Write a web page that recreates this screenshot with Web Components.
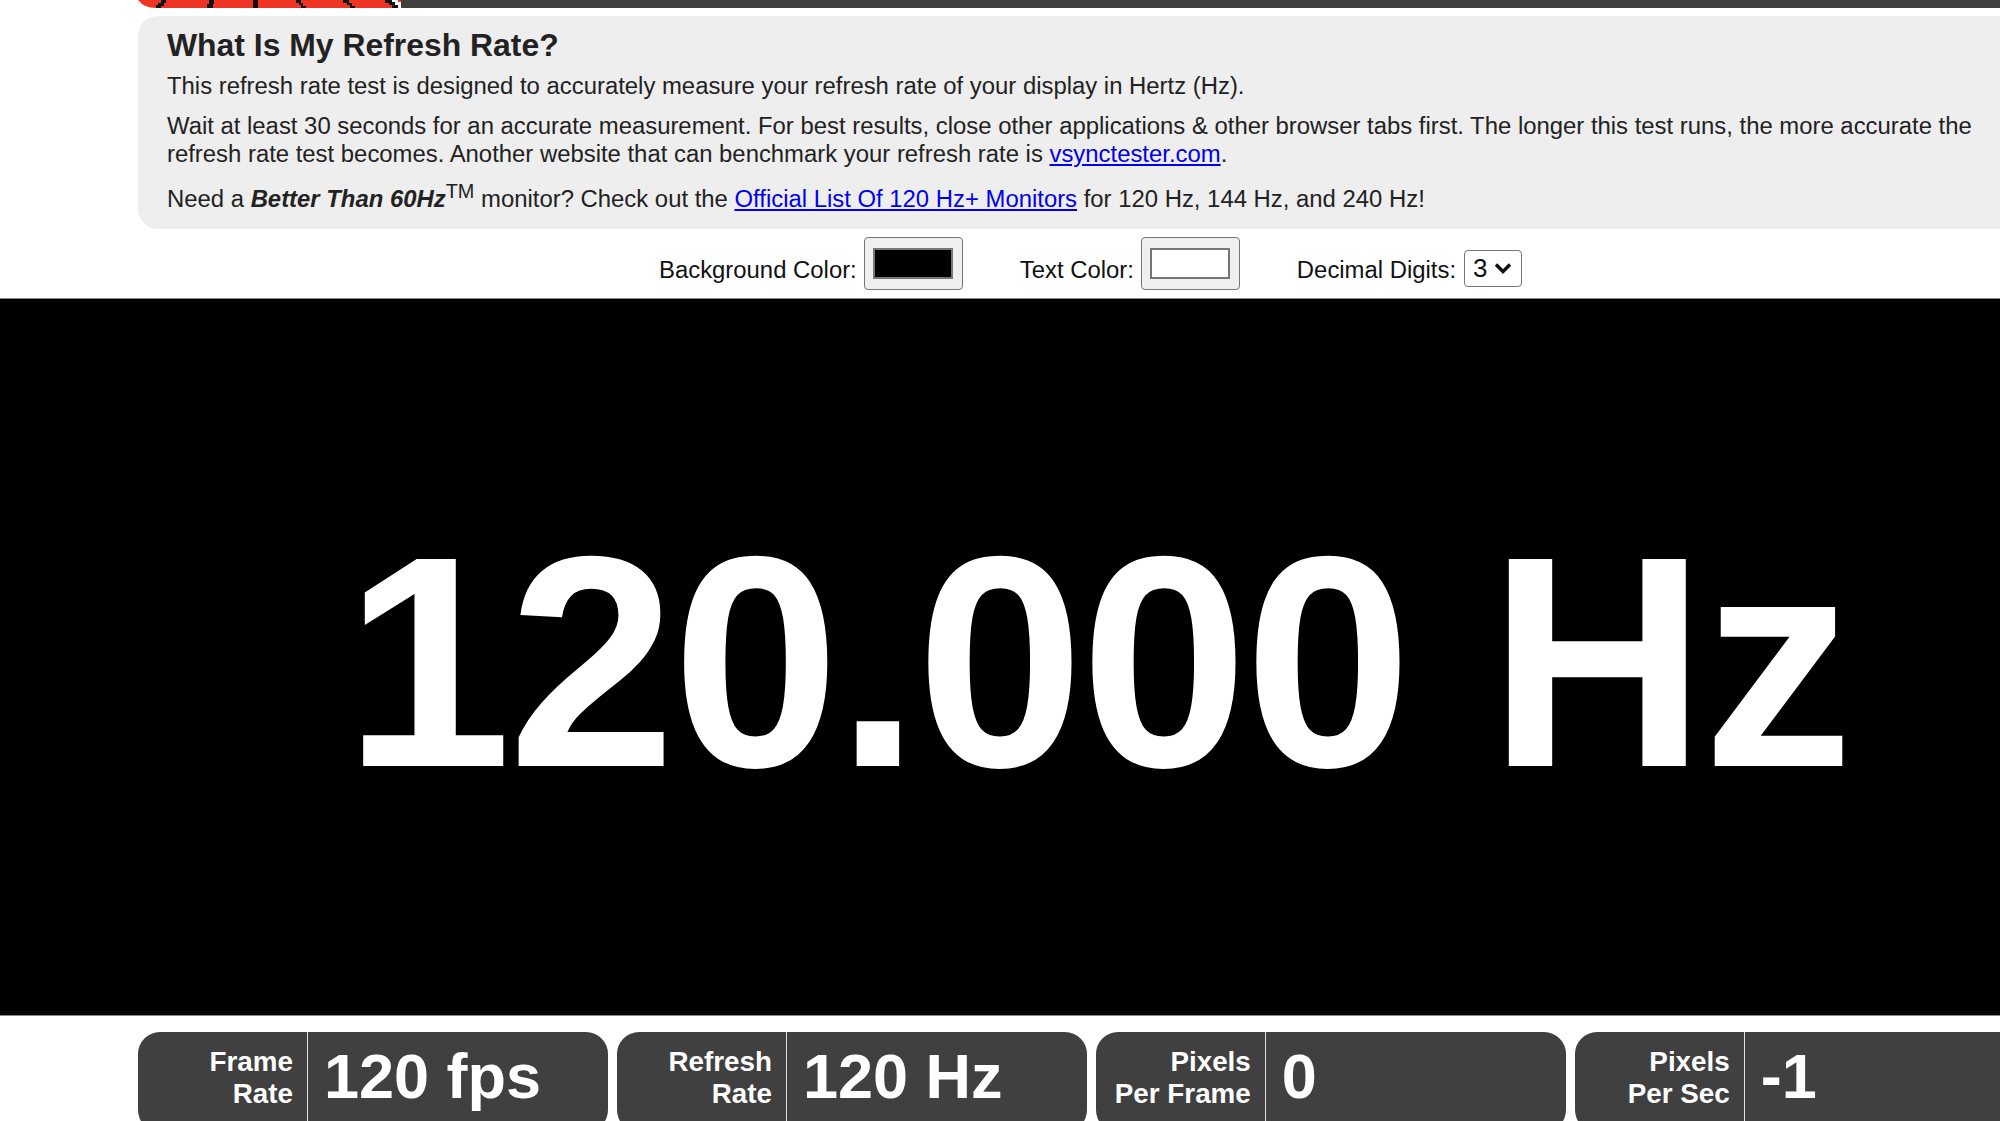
<!DOCTYPE html>
<html>
<head>
<meta charset="utf-8">
<title>What Is My Refresh Rate?</title>
<style>
  html, body { margin:0; padding:0; height:1121px; overflow:hidden; background:#fff; }
  body { font-family:"Liberation Sans", Arial, sans-serif; color:#222; }
  #page { width:2194px; display:flex; flex-direction:column; }
</style>
</head>
<body>
<div id="page">
  <top-bar></top-bar>
  <info-panel>
    <span slot="title">What Is My Refresh Rate?</span>
    <p>This refresh rate test is designed to accurately measure your refresh rate of your display in Hertz (Hz).</p>
    <p>Wait at least 30 seconds for an accurate measurement. For best results, close other applications &amp; other browser tabs first. The longer this test runs, the more accurate the refresh rate test becomes. Another website that can benchmark your refresh rate is <a href="#">vsynctester.com</a>.</p>
    <p>Need a <b><i>Better Than 60Hz</i></b><sup>TM</sup> monitor? Check out the <a href="#">Official List Of 120 Hz+ Monitors</a> for 120 Hz, 144 Hz, and 240 Hz!</p>
  </info-panel>
  <test-controls></test-controls>
  <rate-display>120.000 Hz</rate-display>
  <div id="stats" style="display:flex;gap:8.6px;padding:16px 149px 0 138px;">
    <stat-card value="120 fps">Frame<br>Rate</stat-card>
    <stat-card value="120 Hz">Refresh<br>Rate</stat-card>
    <stat-card value="0">Pixels<br>Per Frame</stat-card>
    <stat-card value="-1">Pixels<br>Per Sec</stat-card>
  </div>
</div>
<script>
class TopBar extends HTMLElement {
  constructor() {
    super();
    this.attachShadow({mode:'open'}).innerHTML = `
      <style>
        :host { display:flex; height:8px; padding-left:138px; }
        svg { display:block; width:263px; height:8px; flex:none; }
        #rest { flex:1; background:#404040; }
      </style>
      <svg viewBox="0 0 263 8">
        <path d="M0 0H263V8H18Q6 8 0 0Z" fill="#ee3424"/>
        <!-- bottom edge of the pixel logo, black strokes fanning out -->
        <path d="M23 0h5v3h-2v3h-3v2h-5V5h2V3h3zM71 0h5v4h-1v4h-6V4h2zM115 0h5v8h-5zM158 0h5v3h2v3h3v2h-5V5h-2V3h-3zM205 0h6v3h3v3h3v2h-5V5h-3V3h-4z" fill="#111"/>
        <path d="M247 0h7v2h3v3h3v3h-6V5h-3V3h-4z" fill="#111"/>
        <path d="M254 0h6v2h3v6h-3V5h-3V2h-3z" fill="#fff"/>
      </svg>
      <div id="rest"></div>`;
  }
}
class InfoPanel extends HTMLElement {
  constructor() {
    super();
    this.attachShadow({mode:'open'}).innerHTML = `
      <style>
        :host { display:block; margin:8px 138px 0; padding:10px 29px 16px; background:#eee; border-radius:20px; font-size:23.88px; line-height:28px; }
        h1 { margin:0 0 8px; font-size:31.9px; line-height:38px; font-weight:bold; }
        ::slotted(p) { margin:0 0 12px; }
        ::slotted(p:last-child) { margin:-3px 0 0; }
      </style>
      <h1><slot name="title"></slot></h1>
      <slot></slot>`;
  }
}
class ColorButton extends HTMLElement {
  constructor() {
    super();
    this.attachShadow({mode:'open'}).innerHTML = `
      <style>
        :host { display:flex; align-items:center; justify-content:center; box-sizing:border-box; width:99px; height:53px; background:#efefef; border:1px solid #767676; border-radius:4px; }
        div { box-sizing:border-box; width:80px; height:31px; border:2px solid #767676; background:${this.getAttribute('color')}; }
      </style>
      <div></div>`;
  }
}
class TestControls extends HTMLElement {
  constructor() {
    super();
    this.attachShadow({mode:'open'}).innerHTML = `
      <style>
        :host { display:flex; align-items:center; height:69px; padding-left:659px; font-size:23.88px; color:#111; }
        label { display:flex; align-items:center; gap:7px; }
        label + label { margin-left:57px; }
        label span { margin-top:14px; }
        #sel { display:flex; align-items:center; box-sizing:border-box; width:58px; height:37px; margin:10px 0 0 1px; padding-left:8px; gap:6px; background:#fff; border:1px solid #767676; border-radius:4px; font-size:26px; }
        svg { width:18px; height:12px; }
      </style>
      <label><span>Background Color:</span><color-button color="#000"></color-button></label>
      <label><span>Text Color:</span><color-button color="#fff"></color-button></label>
      <label><span>Decimal Digits:</span><div id="sel">3<svg viewBox="0 0 18 12"><path d="M2 2.5l7 7 7-7" fill="none" stroke="#111" stroke-width="3.4"/></svg></div></label>`;
  }
}
class RateDisplay extends HTMLElement {
  constructor() {
    super();
    this.attachShadow({mode:'open'}).innerHTML = `
      <style>
        :host { display:flex; box-sizing:border-box; height:718px; padding-top:12px; align-items:center; justify-content:center; background:#000; color:#fff; border:solid #888; border-width:1px 0; font-size:301px; letter-spacing:-3.4px; font-weight:bold; line-height:1; white-space:nowrap; }
      </style>
      <slot></slot>`;
  }
}
class StatCard extends HTMLElement {
  constructor() {
    super();
    this.attachShadow({mode:'open'}).innerHTML = `
      <style>
        :host { display:flex; flex:1; height:100px; background:#404040; color:#fff; border-radius:22px; overflow:hidden; font-weight:bold; }
        #label { box-sizing:border-box; width:170px; padding:14px 14px 0 0; text-align:right; font-size:27.8px; line-height:32px; border-right:1px solid #ddd; }
        #value { padding:4px 0 0 16px; font-size:63px; line-height:80px; white-space:nowrap; }
      </style>
      <div id="label"><slot></slot></div>
      <div id="value">${this.getAttribute('value')}</div>`;
  }
}
customElements.define('top-bar', TopBar);
customElements.define('info-panel', InfoPanel);
customElements.define('color-button', ColorButton);
customElements.define('test-controls', TestControls);
customElements.define('rate-display', RateDisplay);
customElements.define('stat-card', StatCard);
</script>
</body>
</html>
